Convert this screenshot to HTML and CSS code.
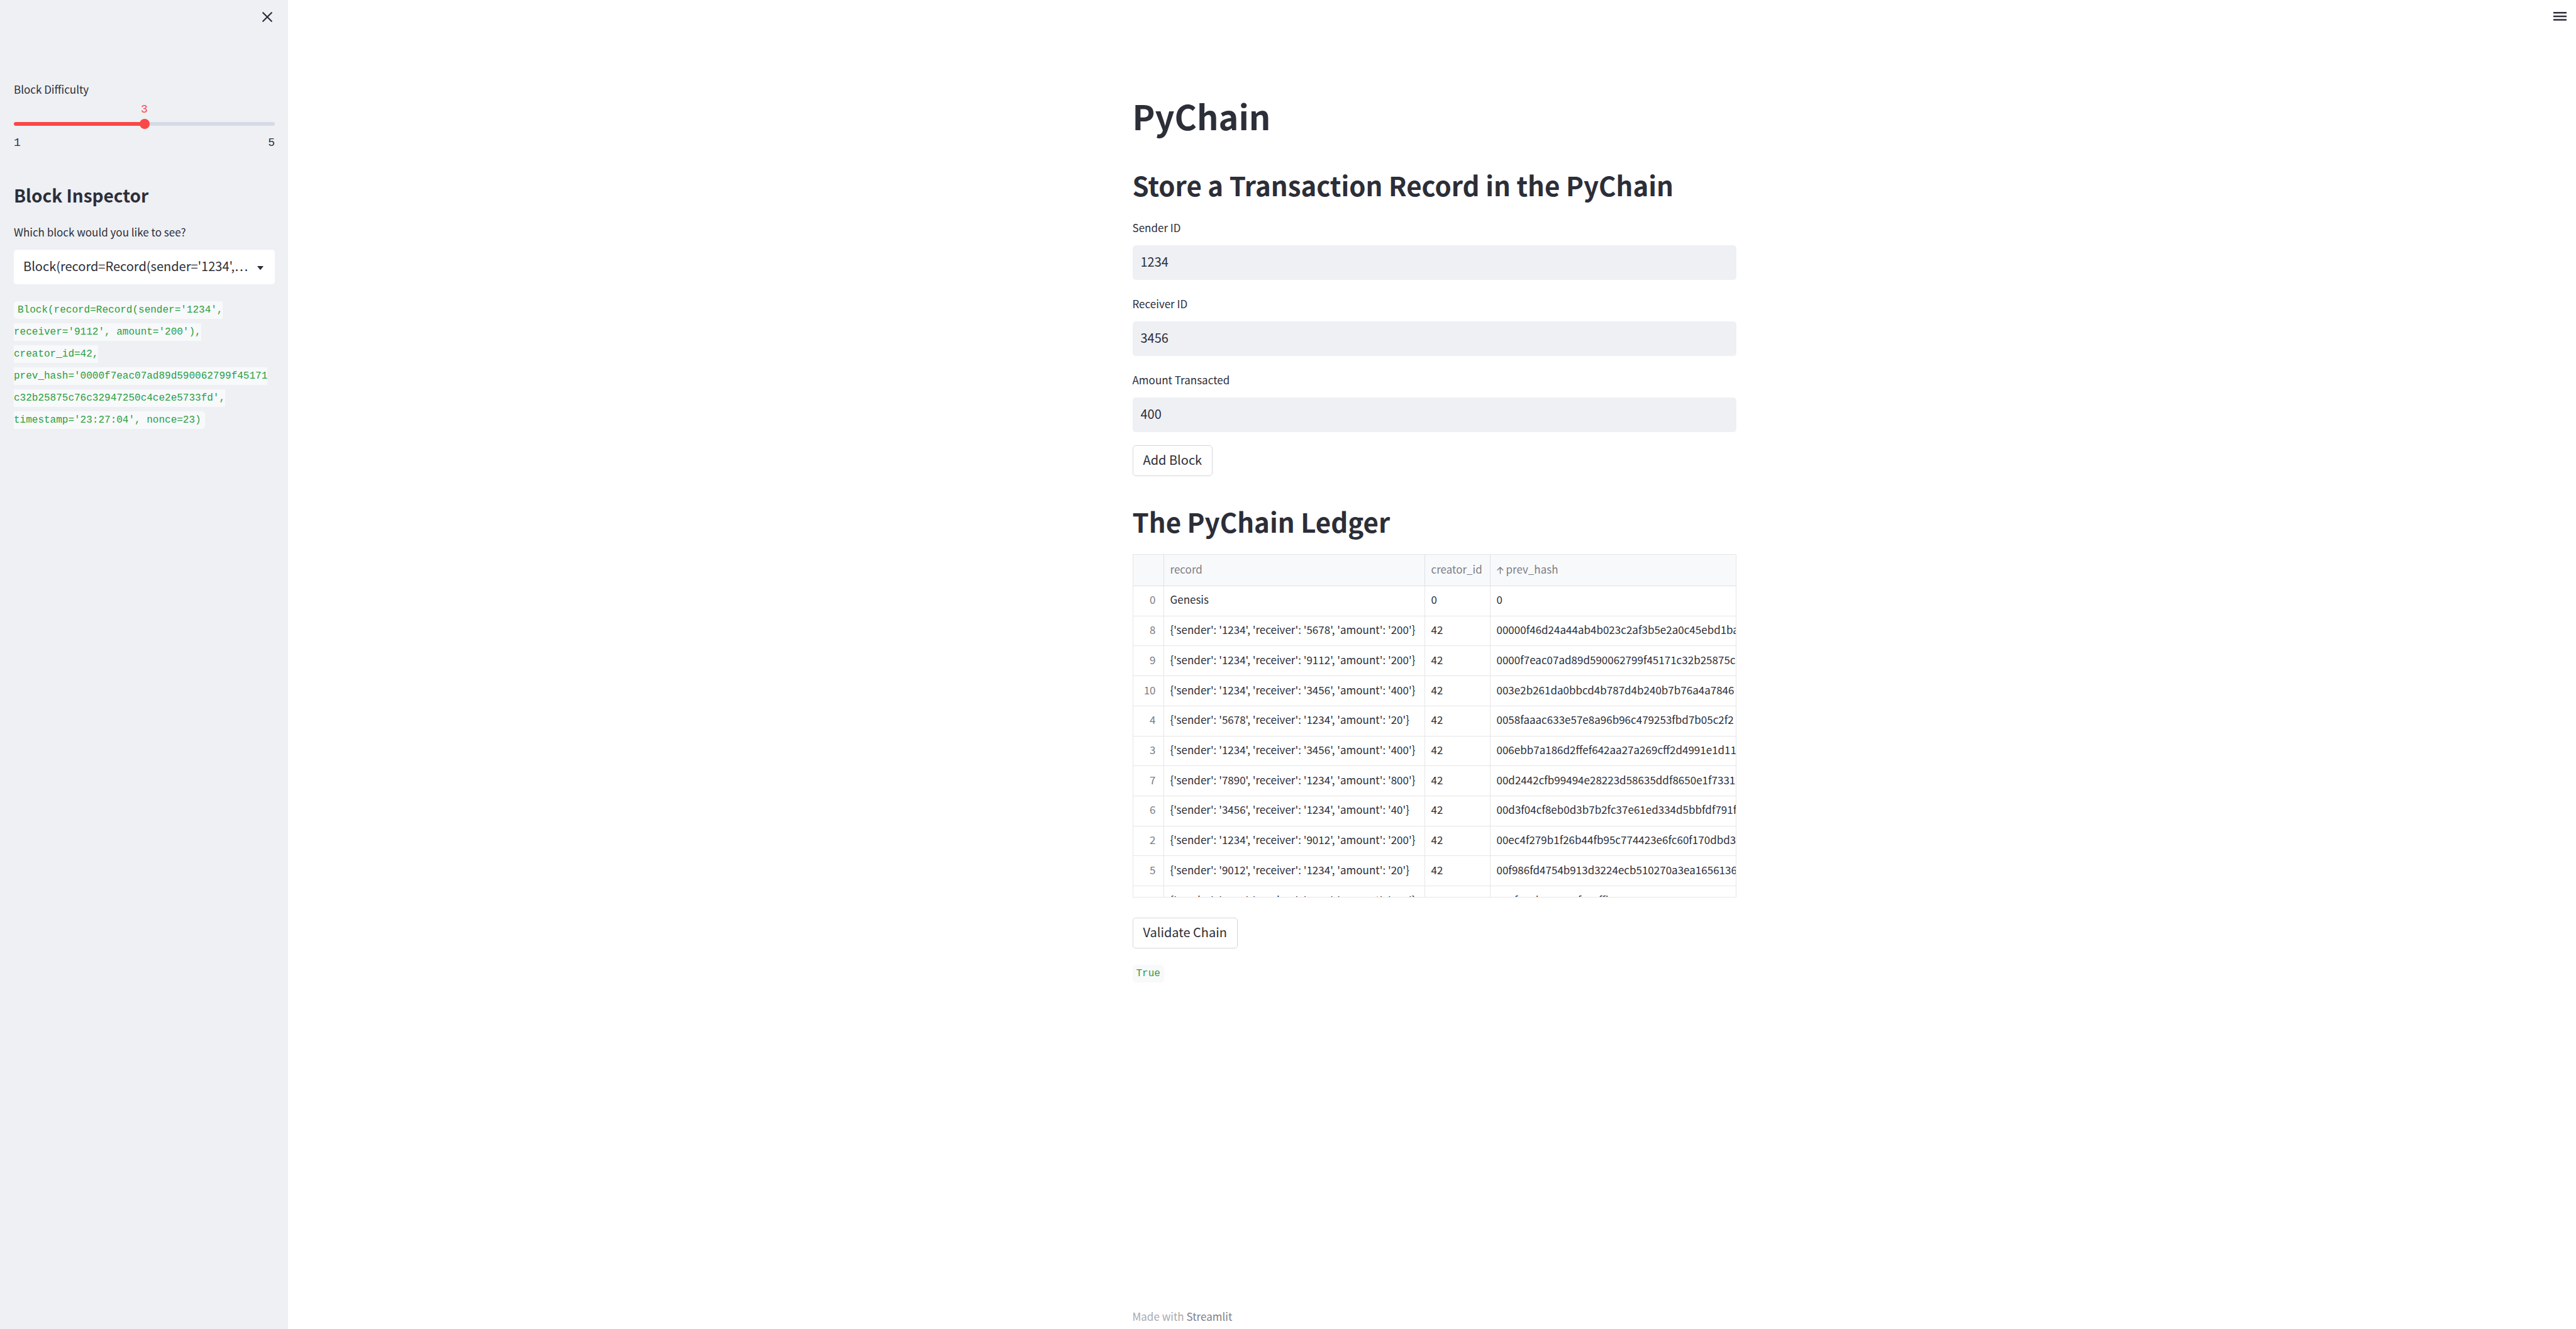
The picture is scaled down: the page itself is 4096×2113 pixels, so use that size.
FILE: index.html
```html
<!DOCTYPE html>
<html lang="en">
<head>
<meta charset="utf-8">
<title>PyChain</title>
<link rel="stylesheet" href="styles.css">
</head>
<body>
<div class="app">
  <aside class="sidebar">
    <div class="sidebar-head">
      <button class="icon-button" type="button" aria-label="Close sidebar">
        <svg class="icon-close" viewBox="0 0 16 16" aria-hidden="true"><path d="M1.2 1.2 14.8 14.8M14.8 1.2 1.2 14.8" fill="none" stroke="currentColor" stroke-width="2.2" stroke-linecap="round"/></svg>
      </button>
    </div>
    <div class="slider">
      <label class="label" for="difficulty">Block Difficulty</label>
      <output class="slider-value" for="difficulty">3</output>
      <input class="slider-input" id="difficulty" type="range" min="1" max="5" value="3">
      <div class="slider-ticks"><span>1</span><span>5</span></div>
    </div>
    <h2 class="sidebar-title">Block Inspector</h2>
    <label class="label" for="block">Which block would you like to see?</label>
    <div class="select-wrap">
      <select class="select" id="block">
        <option>Block(record=Record(sender='1234',…</option>
      </select>
      <svg class="select-arrow" viewBox="0 0 10 6" aria-hidden="true"><path d="M0 0h10L5.8 5.4q-.8.9-1.6 0z" fill="currentColor"/></svg>
    </div>
    <p class="code-line"><code class="code">Block(record=Record(sender='1234', receiver='9112', amount='200'), creator_id=42, prev_hash='0000f7eac07ad89d590062799f45171c32b25875c76c32947250c4ce2e5733fd', timestamp='23:27:04', nonce=23)</code></p>
  </aside>

  <main class="main">
    <button class="icon-button menu-button" type="button" aria-label="Menu">
      <svg class="icon-menu" viewBox="0 0 21 14" aria-hidden="true"><path d="M0 0h21v2.500H0zM0 5.700h21v2.500H0zM0 11.300h21v2.500H0z" fill="currentColor"/></svg>
    </button>
    <div class="content">
      <h1 class="title">PyChain</h1>
      <h2 class="heading">Store a Transaction Record in the PyChain</h2>
      <div class="fields">
        <div class="field">
          <label class="label" for="sender">Sender ID</label>
          <input class="text-input" id="sender" type="text" value="1234">
        </div>
        <div class="field">
          <label class="label" for="receiver">Receiver ID</label>
          <input class="text-input" id="receiver" type="text" value="3456">
        </div>
        <div class="field">
          <label class="label" for="amount">Amount Transacted</label>
          <input class="text-input" id="amount" type="text" value="400">
        </div>
      </div>
      <button class="button" type="button">Add Block</button>
      <h2 class="heading ledger-heading">The PyChain Ledger</h2>
      <div class="ledger">
        <table class="table">
          <colgroup><col class="col-index"><col class="col-record"><col class="col-creator"><col></colgroup>
          <thead>
            <tr><th></th><th>record</th><th>creator_id</th><th><svg class="sort-arrow" viewBox="0 0 11 12" aria-hidden="true"><path d="M5.500 11.500V1M.8 5.700 5.500 1 10.200 5.700" fill="none" stroke="currentColor" stroke-width="1.400"/></svg>prev_hash</th></tr>
          </thead>
          <tbody>
            <tr><td>0</td><td>Genesis</td><td>0</td><td>0</td></tr>
            <tr><td>8</td><td>{'sender': '1234', 'receiver': '5678', 'amount': '200'}</td><td>42</td><td>00000f46d24a44ab4b023c2af3b5e2a0c45ebd1ba</td></tr>
            <tr><td>9</td><td>{'sender': '1234', 'receiver': '9112', 'amount': '200'}</td><td>42</td><td>0000f7eac07ad89d590062799f45171c32b25875c</td></tr>
            <tr><td>10</td><td>{'sender': '1234', 'receiver': '3456', 'amount': '400'}</td><td>42</td><td>003e2b261da0bbcd4b787d4b240b7b76a4a7846</td></tr>
            <tr><td>4</td><td>{'sender': '5678', 'receiver': '1234', 'amount': '20'}</td><td>42</td><td>0058faaac633e57e8a96b96c479253fbd7b05c2f2</td></tr>
            <tr><td>3</td><td>{'sender': '1234', 'receiver': '3456', 'amount': '400'}</td><td>42</td><td>006ebb7a186d2ffef642aa27a269cff2d4991e1d11</td></tr>
            <tr><td>7</td><td>{'sender': '7890', 'receiver': '1234', 'amount': '800'}</td><td>42</td><td>00d2442cfb99494e28223d58635ddf8650e1f7331</td></tr>
            <tr><td>6</td><td>{'sender': '3456', 'receiver': '1234', 'amount': '40'}</td><td>42</td><td>00d3f04cf8eb0d3b7b2fc37e61ed334d5bbfdf791f</td></tr>
            <tr><td>2</td><td>{'sender': '1234', 'receiver': '9012', 'amount': '200'}</td><td>42</td><td>00ec4f279b1f26b44fb95c774423e6fc60f170dbd3</td></tr>
            <tr><td>5</td><td>{'sender': '9012', 'receiver': '1234', 'amount': '20'}</td><td>42</td><td>00f986fd4754b913d3224ecb510270a3ea1656136</td></tr>
            <tr><td>1</td><td>{'sender': '1234', 'receiver': '5678', 'amount': '200'}</td><td>42</td><td>010f310b506774f71cffbe0c57a787806620011281</td></tr>
          </tbody>
        </table>
      </div>
      <button class="button" type="button">Validate Chain</button>
      <p class="code-line result"><code class="code">True</code></p>
      <footer class="footer">Made with <a class="footer-link" href="#">Streamlit</a></footer>
    </div>
  </main>
</div>
</body>
</html>
```
FILE: styles.css
```css
* { box-sizing: border-box; }

body {
  margin: 0;
  background: #fff;
  color: #2c2e38;
  font: 17px/24px "Noto Sans CJK KR", "Noto Sans", sans-serif;
}

h1, h2, p { margin: 0; }

button, input, select { font-family: inherit; color: inherit; }

.app { display: flex; min-height: 100vh; }

.sidebar {
  flex: 0 0 458px;
  padding: 0 21px 40px 22px;
  background: #eef0f4;
}

.sidebar-head {
  display: flex;
  justify-content: flex-end;
  height: 130px;
  padding-top: 19px;
}

.icon-button {
  display: flex;
  align-items: center;
  justify-content: center;
  width: 24px;
  height: 16px;
  padding: 0;
  border: 0;
  background: none;
}

.icon-close { width: 16px; height: 16px; }

.label { display: block; }

.slider-value,
.slider-ticks {
  font-family: "Liberation Mono", monospace;
  font-size: 18px;
}

.slider-value {
  display: block;
  margin-top: 8px;
  color: #fa4747;
  text-align: center;
}

.slider-input {
  display: block;
  width: 100%;
  height: 16px;
  margin: 3px 0 10px;
  appearance: none;
  background: none;
}

.slider-input::-webkit-slider-runnable-track {
  height: 6px;
  border-radius: 3px;
  background: linear-gradient(to right, #fa4747 50%, #d5dae5 50%);
}

.slider-input::-webkit-slider-thumb {
  width: 16px;
  height: 16px;
  margin-top: -5px;
  border-radius: 50%;
  appearance: none;
  background: #fa4747;
}

.slider-ticks { display: flex; justify-content: space-between; }

.sidebar-title {
  margin: 53px 0 29px;
  font-size: 28px;
  line-height: 36px;
}

.select-wrap { position: relative; margin: 16px 0 24px; }

.select {
  display: block;
  width: 100%;
  height: 55px;
  padding: 0 40px 4px 15px;
  border: 0;
  border-radius: 5px;
  appearance: none;
  background: #fff;
  font-size: 20px;
  font-variant-east-asian: proportional-width;
  text-overflow: ellipsis;
}

.select-arrow {
  position: absolute;
  top: 26px;
  right: 18px;
  width: 10px;
  height: 6px;
}

.code-line {
  padding-right: 8px;
  font: 16px/35px "Liberation Mono", monospace;
  overflow-wrap: anywhere;
}

.code {
  padding: 5px 6px;
  border-radius: 5px;
  background: #f8f9fb;
  color: #28a043;
  font: inherit;
}

.main {
  position: relative;
  display: flex;
  flex: 1;
  justify-content: center;
  padding-left: 7px;
}

.menu-button { position: absolute; top: 18px; right: 14px; }

.icon-menu { width: 21px; height: 14px; }

.content {
  display: flex;
  flex-direction: column;
  align-items: flex-start;
  width: 100%;
  max-width: 960px;
  padding-top: 152px;
}

.title { font-size: 54px; line-height: 64px; }

.heading {
  margin: 52px 0 30px;
  font-size: 42px;
  line-height: 52px;
}

.ledger-heading { margin: 46px 0 26px; }

.fields {
  display: flex;
  flex-direction: column;
  gap: 26px;
  width: 100%;
  margin-bottom: 21px;
}

.text-input {
  display: block;
  width: 100%;
  height: 55px;
  margin-top: 16px;
  padding: 0 13px 4px;
  border: 0;
  border-radius: 5px;
  background: #eef0f4;
  font-size: 20px;
}

.button {
  height: 49px;
  padding: 0 16px 4px;
  border: 1px solid #d5d6d9;
  border-radius: 5px;
  background: #fff;
  font-size: 20px;
}

.ledger {
  width: 100%;
  height: 546px;
  margin-bottom: 32px;
  overflow: hidden;
  border: 1px solid #e6e6e8;
}

.table {
  width: 100%;
  height: 575px;
  border-spacing: 0;
  table-layout: fixed;
  font-size: 17px;
}

.col-index { width: 49px; }
.col-record { width: 415px; }
.col-creator { width: 104px; }

.table th,
.table td {
  padding: 0 0 4px 10px;
  overflow: hidden;
  border-right: 1px solid #e6e6e8;
  border-bottom: 1px solid #e6e6e8;
  font-weight: 400;
  text-align: left;
  white-space: nowrap;
}

.table th {
  height: 50px;
  border-color: #dfe0e4;
  background: #f8f9fb;
  color: #7c7d85;
}

.table th:last-child,
.table td:last-child { border-right: 0; }

.table td:first-child {
  padding-right: 12px;
  padding-left: 0;
  color: #7c7d85;
  text-align: right;
}

.sort-arrow { width: 11px; height: 12px; margin-right: 4px; vertical-align: -1px; }

.result { margin-top: 23px; }

.footer { margin-top: auto; padding-bottom: 8px; color: #a9aaaf; }

.footer-link { color: #808188; text-decoration: none; }
```
